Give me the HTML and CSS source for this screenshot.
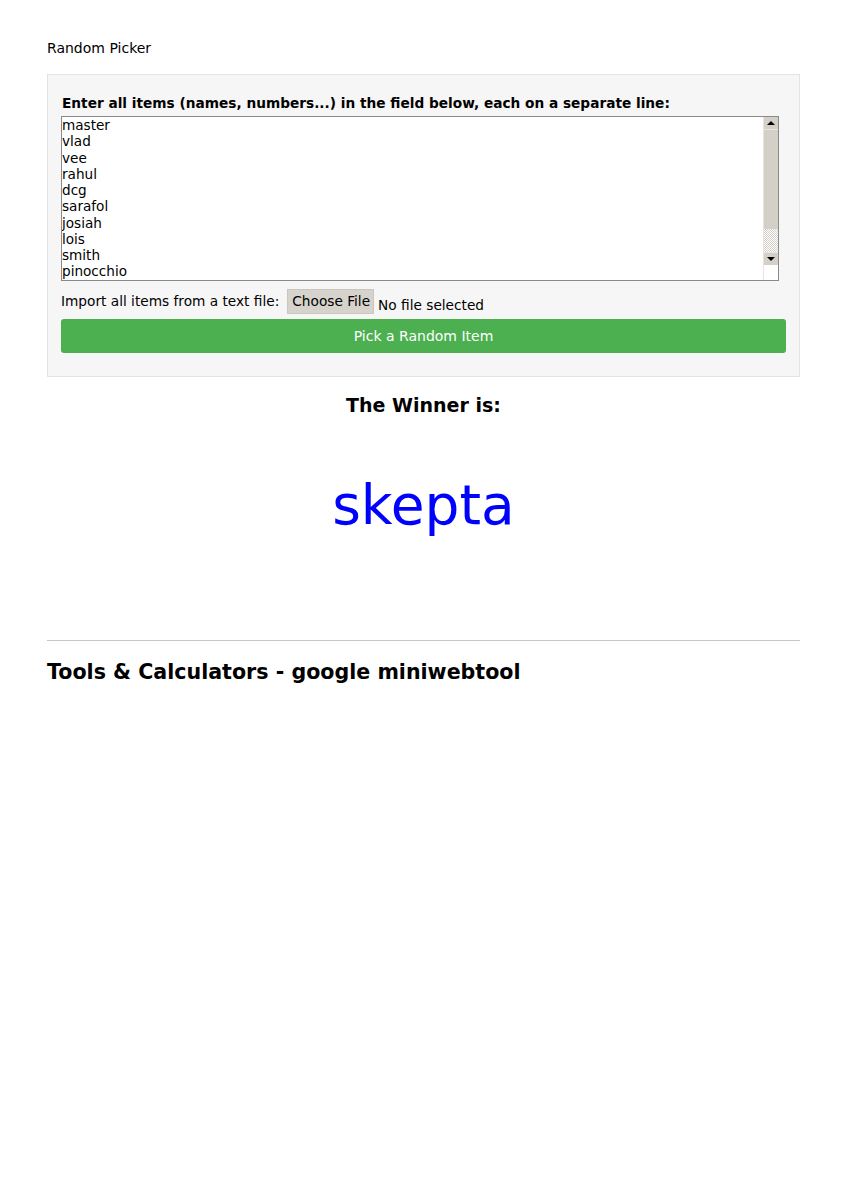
FILE: index.html
```html
<!DOCTYPE html>
<html>
<head>
<meta charset="utf-8">
<title>Random Picker</title>
<link rel="stylesheet" href="styles.css">
</head>
<body>
<div class="page">
  <div class="crumb">Random Picker</div>
  <div class="panel">
    <div class="label">Enter all items (names, numbers...) in the field below, each on a separate line:</div>
    <div class="field">
      <div class="items">master<br>vlad<br>vee<br>rahul<br>dcg<br>sarafol<br>josiah<br>lois<br>smith<br>pinocchio<br>skepta<br>drake</div>
      <div class="scrollbar">
        <div class="sb-btn"><svg width="8" height="4" viewBox="0 0 8 4"><path d="M0 4 L4 0 L8 4 Z" fill="#000"/></svg></div>
        <div class="sb-thumb"></div>
        <div class="sb-track"></div>
        <div class="sb-btn sb-down"><svg width="8" height="4" viewBox="0 0 8 4"><path d="M0 0 L8 0 L4 4 Z" fill="#000"/></svg></div>
        <div class="sb-corner"></div>
      </div>
    </div>
    <div class="import">
      <span class="import-label">Import all items from a text file:</span>
      <span class="choose">Choose File</span>
      <span class="nofile">No file selected</span>
    </div>
    <div class="pick">Pick a Random Item</div>
  </div>
  <div class="winner-title">The Winner is:</div>
  <div class="winner">skepta</div>
  <hr class="rule">
  <h2 class="tools">Tools &amp; Calculators - google miniwebtool</h2>
</div>
</body>
</html>
```
FILE: styles.css
```css
html, body {
  margin: 0;
  padding: 0;
  background: #fff;
}
body {
  font-family: "DejaVu Sans", sans-serif;
  font-size: 14px;
  color: #000;
}
.page {
  width: 753px;
  margin: 0 0 0 47px;
  padding-top: 40px;
}
.crumb {
  font-size: 14px;
  line-height: 17px;
  height: 17px;
}
.panel {
  margin-top: 17px;
  background: #f6f6f6;
  border: 1px solid #e3e3e3;
  padding: 20px 13px 23px 13px;
}
.label {
  font-weight: bold;
  font-size: 13.7px;
  line-height: 17px;
  padding-left: 1px;
  margin-bottom: 4px;
}
.field {
  display: flex;
  width: 716px;
  height: 163px;
  border: 1px solid #8a8a8a;
  background: #fff;
}
.items {
  flex: 1;
  overflow: hidden;
  font-size: 13.6px;
  line-height: 16.25px;
  padding: 0 1px 0 0;
}
.scrollbar {
  width: 14px;
  display: flex;
  flex-direction: column;
  border-left: 1px solid #e6e4df;
}
.sb-btn {
  height: 12px;
  background: #d4d0c8;
  border-bottom: 1px solid #e8e6e1;
  display: flex;
  align-items: center;
  justify-content: center;
}
.sb-down {
  border-bottom: 0;
  border-top: 1px solid #e8e6e1;
}
.sb-thumb {
  height: 99px;
  background: #d4d0c8;
}
.sb-track {
  height: 23px;
  background: repeating-conic-gradient(#d4d0c8 0 25%, #ffffff 0 50%) 0 0 / 2px 2px;
}
.sb-corner {
  flex: 1;
  background: #fff;
}
.import {
  display: flex;
  align-items: center;
  margin-top: 7px;
  height: 27px;
  font-size: 13.7px;
  line-height: 17px;
}
.import-label {
  margin-right: 8px;
}
.choose {
  background: #d6d3cc;
  border: 1px solid #c9c6bf;
  padding: 3px 3px 3px 4px;
  line-height: 17px;
}
.nofile {
  margin-left: 4px;
  padding-top: 8px;
}
.pick {
  margin-top: 4px;
  background: #4caf50;
  color: #fff;
  text-align: center;
  border-radius: 3px;
  height: 34px;
  line-height: 34px;
  font-size: 14px;
}
.winner-title {
  text-align: center;
  font-weight: bold;
  font-size: 19px;
  line-height: 22px;
  margin-top: 17px;
}
.winner {
  text-align: center;
  color: #0000ff;
  font-size: 55px;
  line-height: 64px;
  margin-top: 57px;
}
.rule {
  border: 0;
  border-top: 1px solid #c4c8c8;
  margin: 103px 0 0 0;
  height: 0;
}
.tools {
  font-size: 20.6px;
  line-height: 26px;
  margin: 18px 0 0 0;
}
```
